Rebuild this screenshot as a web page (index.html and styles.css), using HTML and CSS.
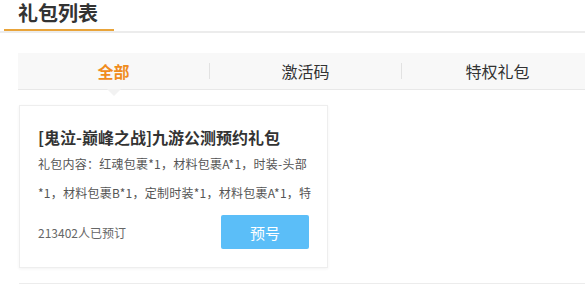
FILE: index.html
```html
<!DOCTYPE html>
<html lang="zh">
<head>
<meta charset="utf-8">
<link rel="stylesheet" href="styles.css">
</head>
<body>
<div class="page">
  <div class="head"><h2 class="head-title">礼包列表</h2></div>
  <div class="tabs">
    <div class="tab active">全部<span class="arrow"></span></div>
    <div class="sep"></div>
    <div class="tab">激活码</div>
    <div class="sep"></div>
    <div class="tab">特权礼包</div>
  </div>
  <div class="list">
    <div class="card">
      <div class="card-title">[鬼泣-巅峰之战]九游公测预约礼包</div>
      <div class="card-desc">礼包内容：红魂包裹*1，材料包裹A*1，时装-头部*1，材料包裹B*1，定制时装*1，材料包裹A*1，特殊材料包裹*1，金币*10000</div>
      <div class="card-foot">
        <span class="count">213402人已预订</span>
        <button class="btn">预号</button>
      </div>
    </div>
  </div>
</div>
</body>
</html>
```
FILE: styles.css
```css
html, body { margin: 0; padding: 0; background: #fff; }
body {
  font-family: "Noto Sans CJK SC", "Liberation Sans", sans-serif;
  width: 585px; height: 293px; overflow: hidden;
}
.page { width: 585px; }
.head { border-bottom: 2px solid #ececec; height: 31px; }
.head-title {
  margin: 0 0 0 4px; width: 110px; box-sizing: border-box;
  padding: 0 0 0 14px; height: 31px; line-height: 25px;
  font-size: 20px; font-weight: bold; color: #333;
  border-bottom: 2px solid #e9a43a;
}
.tabs {
  margin: 20px 0 0 18px; width: 580px; height: 36px;
  background: #f8f8f8; border-bottom: 1px solid #e8e8e8;
  display: flex; align-items: center;
}
.tab {
  position: relative; width: 191px; flex: none;
  text-align: center; font-size: 16px; color: #333; line-height: 36px;
}
.tab.active { color: #f08c1e; font-weight: bold; }
.sep { width: 1px; height: 16px; background: #e2e2e2; flex: none; }
.arrow {
  position: absolute; left: 89px; top: 36px;
  width: 0; height: 0;
  border-left: 7px solid transparent; border-right: 7px solid transparent;
  border-top: 7px solid #f2f2f2;
}
.list {
  margin: 15px 0 0 19px; padding-bottom: 15px;
  border-bottom: 1px solid #ececec;
}
.card {
  width: 309px; height: 163px; box-sizing: border-box;
  border: 1px solid #eeeeee; box-shadow: 0 1px 3px rgba(0,0,0,0.05);
  padding: 19px 15.5px 0 18px; background: #fff;
}
.card-title { font-size: 16px; font-weight: bold; color: #333; line-height: 24px; }
.card-desc {
  margin-top: 0; font-size: 12px; color: #555; line-height: 29px;
  height: 58px; overflow: hidden; word-break: break-all; letter-spacing: 0.25px;
}
.card-foot {
  margin-top: 8px; display: flex; align-items: center; justify-content: space-between;
}
.count { font-size: 12px; color: #666; }
.btn {
  width: 88px; height: 34px; border: 0; border-radius: 2px;
  background: #5bbef8; color: #fff; font-size: 15px;
  font-family: "Noto Sans CJK SC", sans-serif; margin-right: 2.5px; padding: 0;
}
```
